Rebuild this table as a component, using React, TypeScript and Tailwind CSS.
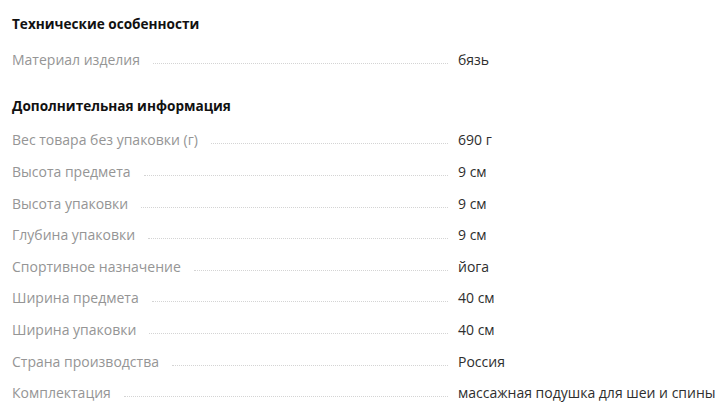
import React from 'react';

interface Spec {
  label: string;
  value: string;
}

const tech: Spec[] = [{ label: 'Материал изделия', value: 'бязь' }];

const extra: Spec[] = [
  { label: 'Вес товара без упаковки (г)', value: '690 г' },
  { label: 'Высота предмета', value: '9 см' },
  { label: 'Высота упаковки', value: '9 см' },
  { label: 'Глубина упаковки', value: '9 см' },
  { label: 'Спортивное назначение', value: 'йога' },
  { label: 'Ширина предмета', value: '40 см' },
  { label: 'Ширина упаковки', value: '40 см' },
  { label: 'Страна производства', value: 'Россия' },
  { label: 'Комплектация', value: 'массажная подушка для шеи и спины' },
];

const SpecRow = ({ label, value }: Spec) => (
  <div className="flex h-[31.6px] items-center">
    <div className="flex w-[436px] shrink-0 items-baseline">
      <span className="whitespace-nowrap text-[#959595]">{label}</span>
      <span className="ml-[13px] flex-1 translate-y-[-1px] border-b border-dotted border-[#d4d4d4]" />
    </div>
    <span className="ml-[10px] whitespace-nowrap text-[#2e2e2e]">{value}</span>
  </div>
);

export default function App() {
  return (
    <div
      className="min-h-[416px] w-[720px] overflow-hidden bg-white px-3 pt-[15px] text-[14px] leading-[18px]"
      style={{ fontFamily: '"Open Sans", "Noto Sans", sans-serif' }}
    >
      <h3 className="mb-[11px] text-[13.6px] font-bold leading-[18px] text-[#111]">Технические особенности</h3>
      {tech.map((s) => (
        <SpecRow key={s.label} {...s} />
      ))}
      <h3 className="mb-[10px] mt-[21px] text-[13.6px] font-bold leading-[18px] text-[#111]">Дополнительная информация</h3>
      {extra.map((s) => (
        <SpecRow key={s.label} {...s} />
      ))}
    </div>
  );
}
